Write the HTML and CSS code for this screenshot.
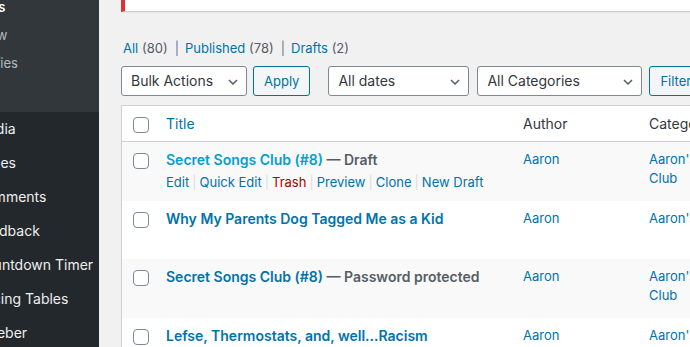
FILE: index.html
```html
<html>
<head>
  <link rel="stylesheet" href="styles.css">
</head>
<body>
  <div class="adminmenu">
    <div class="menuinner">
      <ul class="submenu">
        <li class="current">All Posts</li>
        <li>Add New</li>
        <li>Categories</li>
        <li>Tags</li>
      </ul>
      <ul class="mainmenu">
        <li>Media</li>
        <li>Pages</li>
        <li>Comments</li>
        <li>Feedback</li>
        <li>Countdown Timer</li>
        <li>Pricing Tables</li>
        <li>AWeber</li>
      </ul>
    </div>
  </div>

  <div class="wpcontent">
    <div class="notice"></div>

    <ul class="subsubsub">
      <li><a>All</a> <span class="count">(80)</span><span class="sep">|</span></li>
      <li><a>Published</a> <span class="count">(78)</span><span class="sep">|</span></li>
      <li><a>Drafts</a> <span class="count">(2)</span></li>
    </ul>

    <div class="tablenav">
      <div class="select bulk">Bulk Actions
        <svg class="chev" width="10" height="6" viewBox="0 0 10 6"><path d="M1 1l4 4 4-4" fill="none" stroke="#555d66" stroke-width="1.5"/></svg>
      </div>
      <div class="button apply">Apply</div>
      <div class="select dates">All dates
        <svg class="chev" width="10" height="6" viewBox="0 0 10 6"><path d="M1 1l4 4 4-4" fill="none" stroke="#555d66" stroke-width="1.5"/></svg>
      </div>
      <div class="select cats">All Categories
        <svg class="chev" width="10" height="6" viewBox="0 0 10 6"><path d="M1 1l4 4 4-4" fill="none" stroke="#555d66" stroke-width="1.5"/></svg>
      </div>
      <div class="button filter">Filter</div>
    </div>

    <table class="posts">
      <colgroup>
        <col class="c-check">
        <col class="c-title">
        <col class="c-author">
        <col class="c-cats">
        <col>
      </colgroup>
      <thead>
        <tr>
          <td class="check"><span class="cb"></span></td>
          <th><a>Title</a></th>
          <th class="plain">Author</th>
          <th class="plain nowrap">Categories</th>
          <th class="plain">Tags</th>
        </tr>
      </thead>
      <tbody>
        <tr class="alt">
          <td class="check"><span class="cb"></span></td>
          <td>
            <strong><a class="hover">Secret Songs Club (#8)</a> <span class="state">— Draft</span></strong>
            <div class="rowactions">
              <a>Edit</a><span class="sep">|</span><a>Quick Edit</a><span class="sep">|</span><a class="trash">Trash</a><span class="sep">|</span><a>Preview</a><span class="sep">|</span><a>Clone</a><span class="sep">|</span><a>New Draft</a>
            </div>
          </td>
          <td><a>Aaron</a></td>
          <td><a>Aaron's Club</a></td>
          <td>—</td>
        </tr>
        <tr>
          <td class="check"><span class="cb"></span></td>
          <td><strong><a>Why My Parents Dog Tagged Me as a Kid</a></strong><div class="rowactions hidden">Edit</div></td>
          <td><a>Aaron</a></td>
          <td><a>Aaron's</a></td>
          <td>—</td>
        </tr>
        <tr class="alt">
          <td class="check"><span class="cb"></span></td>
          <td><strong><a>Secret Songs Club (#8)</a> <span class="state">— Password protected</span></strong><div class="rowactions hidden">Edit</div></td>
          <td><a>Aaron</a></td>
          <td><a>Aaron's Club</a></td>
          <td>—</td>
        </tr>
        <tr>
          <td class="check"><span class="cb"></span></td>
          <td><strong><a>Lefse, Thermostats, and, well…Racism</a></strong><div class="rowactions hidden">Edit</div></td>
          <td><a>Aaron</a></td>
          <td><a>Aaron's Club</a></td>
          <td>—</td>
        </tr>
      </tbody>
    </table>
  </div>
</body>
</html>
```

FILE: styles.css
```css
html, body {
    margin: 0;
    height: 100%;
    overflow: hidden;
}

body {
    display: flex;
    background-color: #f1f1f1;
    font-family: "Inter", "Noto Sans", sans-serif;
    font-size: 13px;
    color: #32373c;
}

a {
    color: #0073aa;
    text-decoration: none;
}

/* left admin menu, only its right end is on screen */
.adminmenu {
    width: 99px;
    flex-shrink: 0;
    background-color: #23282d;
    overflow: hidden;
}

.menuinner {
    width: 160px;
    margin-left: -61px;
}

.adminmenu ul {
    list-style: none;
    margin: 0;
    padding: 0;
}

.submenu {
    background-color: #32373c;
    margin-top: -7px !important;
    padding-bottom: 7px !important;
}

.submenu li {
    font-size: 13px;
    line-height: 18px;
    padding: 5px 12px;
    color: rgba(240, 245, 250, 0.7);
}

.submenu li.current {
    color: #fff;
    font-weight: 600;
}

.mainmenu li {
    font-size: 14px;
    line-height: 18px;
    padding: 8px 0 8px 36px;
    color: #eee;
}

.wpcontent {
    padding-left: 22px;
    width: 800px;
    flex-shrink: 0;
}

.notice {
    height: 11px;
    background-color: #fff;
    border-left: 4px solid #dc3232;
    border-bottom: 1px solid #ccd0d4;
    box-shadow: 0 1px 1px rgba(0, 0, 0, 0.04);
}

.subsubsub {
    list-style: none;
    margin: 26px 0 0 2px;
    padding: 0;
    display: flex;
    line-height: 20px;
    color: #646970;
}

.subsubsub .count {
    color: #555d66;
}

.subsubsub .sep {
    padding: 0 6px 0 7px;
    color: #72777c;
}

.tablenav {
    display: flex;
    margin-top: 8px;
    height: 30px;
}

.select {
    position: relative;
    box-sizing: border-box;
    height: 30px;
    border: 1px solid #7e8993;
    border-radius: 3px;
    background-color: #fff;
    font-size: 14px;
    line-height: 28px;
    padding-left: 9px;
    color: #32373c;
}

.chev {
    position: absolute;
    right: 8px;
    top: 12px;
}

.bulk { width: 126px; }
.dates { width: 141px; margin-left: 18px; }
.cats { width: 165px; margin-left: 8px; }

.button {
    box-sizing: border-box;
    height: 30px;
    border: 1px solid #0071a1;
    border-radius: 3px;
    background-color: #f3f5f6;
    color: #0071a1;
    font-size: 13px;
    line-height: 28px;
    padding: 0 10px;
}

.apply { margin-left: 6px; }
.filter { margin-left: 7px; }

.posts {
    margin-top: 9px;
    width: 800px;
    border: 1px solid #ccd0d4;
    border-spacing: 0;
    background-color: #fff;
    box-shadow: 0 1px 1px rgba(0, 0, 0, 0.04);
    table-layout: fixed;
}

.c-check { width: 34px; }
.c-title { width: 357px; }
.c-author { width: 126px; }
.c-cats { width: 78px; }

.posts th, .posts td {
    text-align: left;
    vertical-align: top;
    padding: 8px 10px;
    line-height: 19px;
    font-weight: normal;
}

.posts thead th, .posts thead td {
    font-size: 14px;
    border-bottom: 1px solid #ccd0d4;
    height: 19px;
}

.posts thead .plain {
    color: #32373c;
}

.nowrap {
    white-space: nowrap;
}

.posts td.check {
    padding: 11px 0 0 11px;
}

.posts thead td.check {
    padding-top: 11px;
}

.cb {
    display: block;
    box-sizing: border-box;
    width: 16px;
    height: 16px;
    border: 1px solid #7e8993;
    border-radius: 4px;
    background-color: #fff;
}

.posts tbody td {
    font-size: 13px;
}

.posts tbody strong {
    font-size: 14px;
    line-height: 20px;
    font-weight: 600;
    display: block;
}

.posts .hover {
    color: #00a0d2;
}

.state {
    color: #555d66;
}

.alt td {
    background-color: #f9f9f9;
}

.rowactions {
    padding-top: 2px;
    font-size: 13px;
    line-height: 20.5px;
    white-space: nowrap;
}

.rowactions.hidden {
    visibility: hidden;
}

.rowactions .sep {
    color: #ddd;
    padding: 0 3px;
}

.rowactions .trash {
    color: #a00;
}
```
